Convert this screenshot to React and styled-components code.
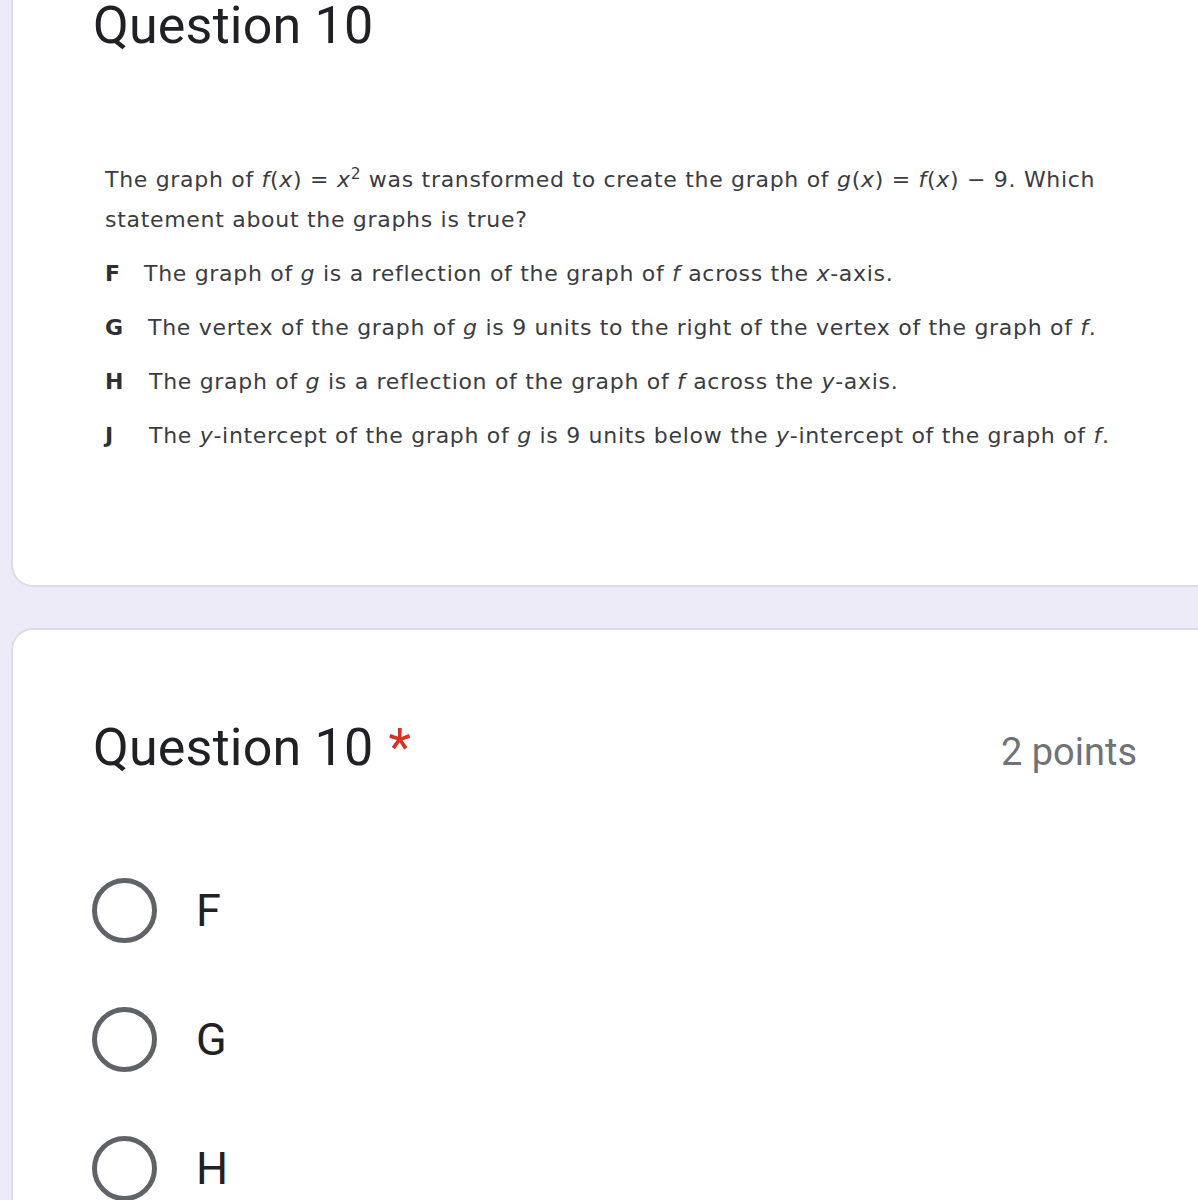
import React from "react";
import styled, { createGlobalStyle } from "styled-components";

const Global = createGlobalStyle`
  html, body { margin: 0; padding: 0; background: #eeebf8; overflow: hidden; }
  body { font-family: Roboto, "Liberation Sans", sans-serif; }
`;

const Page = styled.div`
  display: flex;
  flex-direction: column;
  gap: 41px;
  padding-left: 11px;
  margin-right: -14px;
`;

const Card = styled.section`
  background: #fff;
  border: 2px solid #dddce2;
  border-top: ${(p) => (p.$cut ? "none" : "2px solid #dddce2")};
  border-radius: ${(p) => (p.$cut ? "0 0 0 22px" : "22px 0 0 0")};
  padding: ${(p) => p.$pad};
  display: flex;
  flex-direction: column;
`;

const Title = styled.h2`
  margin: 0;
  font-family: Roboto, "Liberation Sans", sans-serif;
  font-weight: 400;
  font-size: 52px;
  line-height: 52px;
  color: #202124;
  letter-spacing: 0.2px;
`;

const Star = styled.span`
  color: #d93025;
  margin-left: 15px;
`;

const Header = styled.div`
  display: flex;
  align-items: baseline;
  justify-content: space-between;
  padding-right: 73px;
`;

const Points = styled.span`
  font-size: 38px;
  color: #6f7378;
  font-family: Roboto, "Liberation Sans", sans-serif;
`;

const Problem = styled.div`
  margin: 108px 0 0 12px;
  font-family: "DejaVu Sans", Verdana, sans-serif;
  font-size: 22px;
  letter-spacing: 0.7px;
  color: #3a3c42;
`;

const Stem = styled.p`
  margin: 0;
  line-height: 40px;
  white-space: nowrap;
`;

const V = styled.i`
  font-style: italic;
`;

const Sup = styled.sup`
  font-size: 0.7em;
  line-height: 0;
  vertical-align: 0.55em;
`;

const Choices = styled.div`
  margin-top: 6px;
  display: flex;
  flex-direction: column;
`;

const Choice = styled.div`
  display: flex;
  align-items: center;
  height: 54px;
  white-space: nowrap;
`;

const Letter = styled.b`
  font-weight: 700;
  width: ${(p) => p.$w}px;
  flex: none;
  color: #2e3036;
`;

const Options = styled.div`
  margin-top: 72px;
  display: flex;
  flex-direction: column;
`;

const Option = styled.label`
  display: flex;
  align-items: center;
  height: 129px;
  gap: 39px;
`;

const Radio = styled.span`
  width: 65px;
  height: 65px;
  box-sizing: border-box;
  border: 5px solid #5f6368;
  border-radius: 50%;
  flex: none;
  margin-left: -1px;
`;

const OptionText = styled.span`
  font-size: 45px;
  color: #202124;
  font-family: Roboto, "Liberation Sans", sans-serif;
`;

const choices = [
  ["F", 39, <>The graph of <V>g</V> is a reflection of the graph of <V>f</V> across the <V>x</V>-axis.</>],
  ["G", 43, <>The vertex of the graph of <V>g</V> is 9 units to the right of the vertex of the graph of <V>f</V>.</>],
  ["H", 44, <>The graph of <V>g</V> is a reflection of the graph of <V>f</V> across the <V>y</V>-axis.</>],
  ["J", 44, <>The <V>y</V>-intercept of the graph of <V>g</V> is 9 units below the <V>y</V>-intercept of the graph of <V>f</V>.</>],
];

export default function App() {
  return (
    <>
      <Global />
      <Page>
        <Card $cut $pad="0 0 123px 80px">
          <Title>Question 10</Title>
          <Problem>
            <Stem>
              The graph of <V>f</V>(<V>x</V>) = <V>x</V><Sup>2</Sup> was transformed to create the graph of <V>g</V>(<V>x</V>) = <V>f</V>(<V>x</V>) − 9. Which
              <br />
              statement about the graphs is true?
            </Stem>
            <Choices>
              {choices.map(([l, w, t]) => (
                <Choice key={l}>
                  <Letter $w={w}>{l}</Letter>
                  <span>{t}</span>
                </Choice>
              ))}
            </Choices>
          </Problem>
        </Card>
        <Card $pad="92px 0 40px 80px">
          <Header>
            <Title>
              Question 10<Star>*</Star>
            </Title>
            <Points>2 points</Points>
          </Header>
          <Options>
            {["F", "G", "H"].map((o) => (
              <Option key={o}>
                <Radio />
                <OptionText>{o}</OptionText>
              </Option>
            ))}
          </Options>
        </Card>
      </Page>
    </>
  );
}
